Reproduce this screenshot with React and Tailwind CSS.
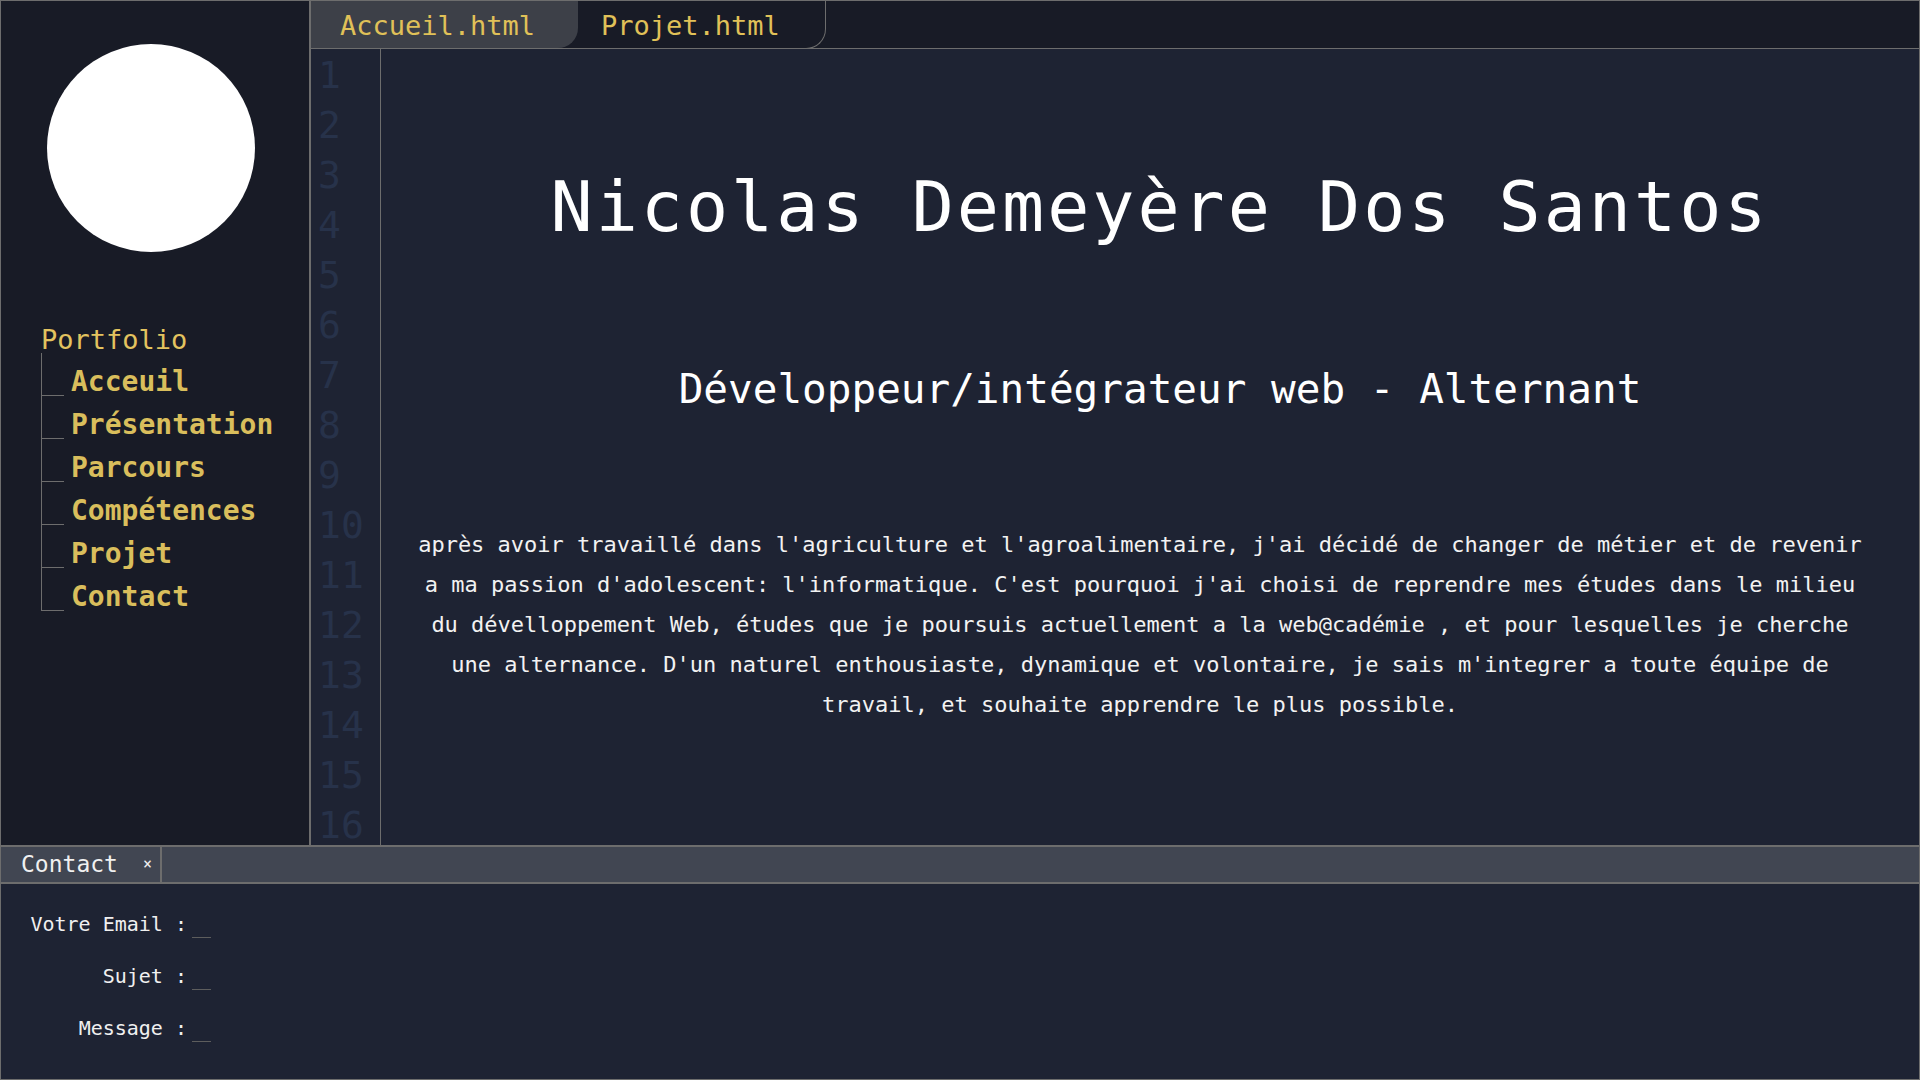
import React from "react";

const navItems = ["Acceuil", "Présentation", "Parcours", "Compétences", "Projet", "Contact"];
const lines = Array.from({ length: 16 }, (_, i) => i + 1);

export default function App() {
  return (
    <div className="w-[1920px] h-[1080px] border border-[#6d6d6d] bg-[#181b26] flex flex-col overflow-hidden font-['DejaVu_Sans_Mono',monospace]">
      <div className="flex h-[844px] shrink-0">
        <aside className="w-[310px] shrink-0 border-r-2 border-[#6d6d6d] bg-[#181b26] flex flex-col">
          <div className="mt-[43px] ml-[46px] w-[208px] h-[208px] rounded-full bg-white" />
          <div className="mt-[74px] pl-[40px] text-[27px] leading-none text-[#e3c35f]">Portfolio</div>
          <ul className="ml-[40px] mt-0 flex flex-col">
            {navItems.map((item) => (
              <li key={item} className="h-[43px] flex items-end">
                <span className="w-[23px] self-stretch border-l border-b border-[#6d6d6d]" />
                <span className="ml-[7px] text-[28px] font-bold leading-none text-[#d9be5c]">{item}</span>
              </li>
            ))}
          </ul>
        </aside>

        <div className="flex-1 flex flex-col min-w-0">
          <div className="h-[48px] shrink-0 border-b border-[#6d6d6d] bg-[#181b26] flex">
            <div className="w-[267px] h-full bg-[#3d4048] rounded-br-[20px] pl-[29px] pt-[11px] text-[27px] leading-none text-[#e0c158]">
              Accueil.html
            </div>
            <div className="w-[248px] h-[48px] border-r border-b border-[#6d6d6d] rounded-br-[20px] pl-[23px] pt-[11px] text-[27px] leading-none text-[#e0c158]">
              Projet.html
            </div>
          </div>

          <div className="flex-1 flex bg-[#1e2333] min-h-0">
            <div className="w-[70px] shrink-0 border-r border-[#6d6d6d] pl-[7px] pt-[1px] overflow-hidden">
              {lines.map((n) => (
                <div key={n} className="text-[38px] leading-[50px] text-[#27324a]">{n}</div>
              ))}
            </div>
            <div className="flex-1 flex flex-col items-center text-white">
              <h1 className="mt-[123px] ml-[20px] text-[70px] leading-none tracking-[3px] whitespace-nowrap text-white">
                Nicolas Demeyère Dos Santos
              </h1>
              <h2 className="mt-[127px] ml-[20px] text-[41px] leading-none whitespace-nowrap text-white">
                Développeur/intégrateur web - Alternant
              </h2>
              <p className="mt-[115px] mr-[20px] w-[1450px] text-[22px] leading-[40px] text-center text-[#f2f2f2]">
                après avoir travaillé dans l'agriculture et l'agroalimentaire, j'ai décidé de changer de métier et de revenir a ma passion d'adolescent: l'informatique. C'est pourquoi j'ai choisi de reprendre mes études dans le milieu du dévelloppement Web, études que je poursuis actuellement a la web@cadémie , et pour lesquelles je cherche une alternance. D'un naturel enthousiaste, dynamique et volontaire, je sais m'integrer a toute équipe de travail, et souhaite apprendre le plus possible.
              </p>
            </div>
          </div>
        </div>
      </div>

      <div className="flex-1 flex flex-col border-t-2 border-[#6d6d6d] bg-[#1e2333]">
        <div className="h-[37px] shrink-0 bg-[#414652] border-b-2 border-[#6d6d6d] flex">
          <div className="w-[161px] border-r-2 border-[#6d6d6d] flex items-center pl-[20px]">
            <span className="text-[23px] leading-none text-[#f0f0f0]">Contact</span>
            <span className="ml-auto mr-[8px] text-[15px] leading-none text-[#f0f0f0]">×</span>
          </div>
        </div>
        <form className="pl-[26px] pt-[30px] flex flex-col gap-[28px]">
          {["Votre Email :", "Sujet :", "Message :"].map((label) => (
            <div key={label} className="flex items-start">
              <label className="w-[160px] text-right text-[20px] leading-none text-[#f0f0f0] whitespace-pre">{label}</label>
              <input className="ml-[5px] w-[19px] h-[24px] bg-transparent border-b border-[#5d5d5d] outline-none" />
            </div>
          ))}
        </form>
      </div>
    </div>
  );
}
